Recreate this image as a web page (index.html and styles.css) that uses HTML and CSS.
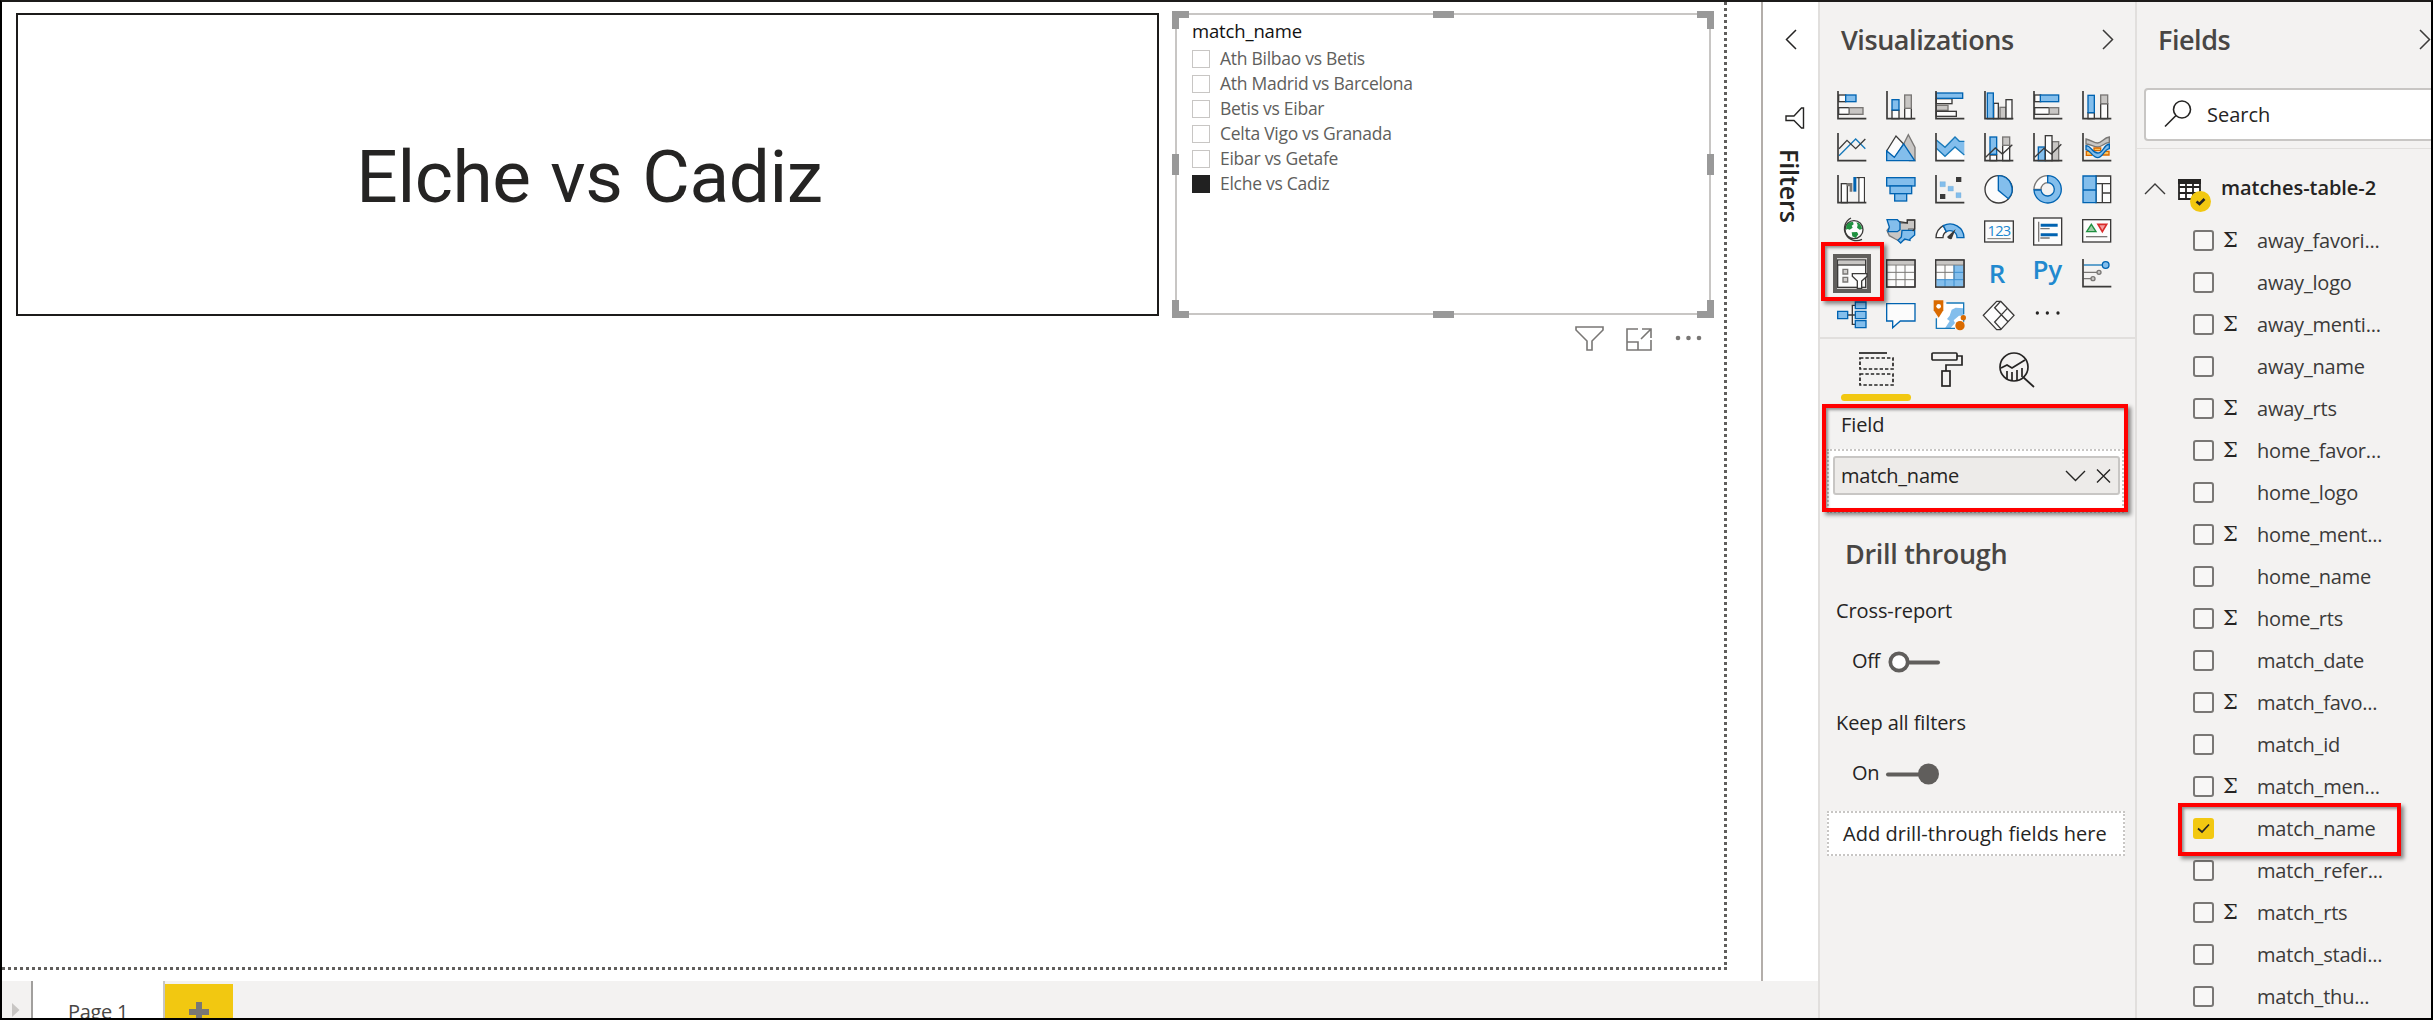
FILE: index.html
```html
<!DOCTYPE html>
<html lang="en">
<head>
<meta charset="utf-8">
<title>Report editor</title>
<link rel="stylesheet" href="styles.css">
</head>
<body>
<div class="app">
  <div class="report">
    <div class="canvas">
      <div class="page">
        <div class="card"><span>Elche vs Cadiz</span></div>
        <div class="slicer">
          <i class="h tl"></i><i class="h tr"></i><i class="h bl"></i><i class="h br"></i>
          <i class="h tm"></i><i class="h bm"></i><i class="h lm"></i><i class="h rm"></i>
          <div class="slicer-title">match_name</div>
          <ul class="slicer-list">
            <li><i></i><span>Ath Bilbao vs Betis</span></li>
            <li><i></i><span>Ath Madrid vs Barcelona</span></li>
            <li><i></i><span>Betis vs Eibar</span></li>
            <li><i></i><span>Celta Vigo vs Granada</span></li>
            <li><i></i><span>Eibar vs Getafe</span></li>
            <li class="on"><i></i><span>Elche vs Cadiz</span></li>
          </ul>
        </div>
        <svg class="visual-tools" width="126" height="28" viewBox="0 0 126 28" fill="none" stroke="#797775" stroke-width="1.6">
          <path d="M1 3H28V6L17 17V26H12V17L1 6Z"/>
          <path d="M63 5H52V26H76V16M52 18H63V26M67 5H76V14M76 5L66 15"/>
          <g fill="#797775" stroke="none"><circle cx="103" cy="14" r="2.3"/><circle cx="113.500" cy="14" r="2.3"/><circle cx="124" cy="14" r="2.3"/></g>
        </svg>
      </div>
    </div>
    <div class="filters">
      <svg width="12" height="21" viewBox="0 0 12 21" fill="none" stroke="#252423" stroke-width="1.5"><path d="M11 1L1.500 10.500L11 20"/></svg>
      <svg class="funnel" width="20" height="22" viewBox="0 0 20 22" fill="none" stroke="#252423" stroke-width="1.4"><path d="M18.500 1V21H16.500L9 13.500H1V9H9L16.500 1Z"/></svg>
      <span>Filters</span>
    </div>
    <div class="tabs">
      <div class="scroll"><svg width="8" height="14" viewBox="0 0 8 14"><path d="M0 0L7.500 7L0 14Z" fill="#c8c6c4"/></svg></div>
      <div class="tab">Page 1</div>
      <div class="add"><svg width="20" height="20" viewBox="0 0 20 20"><path d="M10 0V20M0 10H20" stroke="#797775" stroke-width="6"/></svg></div>
    </div>
  </div>

  <div class="viz">
    <div class="head"><h2>Visualizations</h2><svg width="12" height="21" viewBox="0 0 12 21" fill="none" stroke="#3b3a39" stroke-width="1.5"><path d="M1 1L10.500 10.500L1 20"/></svg></div>
    <div class="grid">
      <svg viewBox="0 0 90 90"><rect class="w" x="5" y="12" width="21" height="20"/><rect class="b" x="26" y="12" width="31" height="20"/><rect class="w" x="5" y="50" width="32" height="20"/><rect class="g" x="37" y="50" width="41" height="20"/><path class="ax" d="M3 0V83H88"/></svg>
      <svg viewBox="0 0 90 90"><rect class="w" x="18" y="58" width="21" height="25"/><rect class="b" x="18" y="26" width="21" height="31"/><rect class="w" x="56" y="52" width="20" height="31"/><rect class="g" x="56" y="12" width="20" height="40"/><path class="ax" d="M3 0V83H88"/></svg>
      <svg viewBox="0 0 90 90"><rect class="w" x="4" y="23" width="47" height="15"/><rect class="g" x="4" y="43" width="35" height="15"/><rect class="w" x="4" y="61" width="60" height="15"/><rect class="b" x="4" y="6" width="79" height="16"/><path class="ax" d="M3 0V83H88"/></svg>
      <svg viewBox="0 0 90 90"><rect class="w" x="29" y="37" width="14" height="46"/><rect class="g" x="48" y="49" width="18" height="34"/><rect class="w" x="66" y="26" width="18" height="57"/><rect class="b" x="10" y="6" width="18" height="77"/><path class="ax" d="M3 0V83H88"/></svg>
      <svg viewBox="0 0 90 90"><rect class="w" x="5" y="12" width="18" height="20"/><rect class="b" x="22" y="12" width="55" height="20"/><rect class="w" x="5" y="50" width="44" height="20"/><rect class="g" x="49" y="50" width="28" height="20"/><path class="ax" d="M3 0V83H88"/></svg>
      <svg viewBox="0 0 90 90"><rect class="w" x="18" y="65" width="19" height="18"/><rect class="b" x="18" y="13" width="19" height="52"/><rect class="w" x="56" y="38" width="21" height="45"/><rect class="g" x="56" y="12" width="21" height="26"/><path class="ax" d="M3 0V83H88"/></svg>

      <svg viewBox="0 0 90 90"><path class="bl" d="M6 68L56 18L85 47"/><path class="dk" d="M6 47L30 22L56 47L85 18"/><path class="ax" d="M3 0V83H88"/></svg>
      <svg viewBox="0 0 90 90"><path class="g" d="M53 33L67 5L87 43V83H70Z"/><path class="w" d="M2 54L30 9L53 33L25 76L2 60Z"/><path class="b" d="M2 83V54L25 73L53 33L86 83Z"/></svg>
      <svg viewBox="0 0 90 90"><path fill="#fff" d="M4 46L30 70L60 42L87 64V82H4Z"/><path fill="#83beec" d="M4 21L30 43L60 12L73 25H88V64L60 42L30 70L4 46Z"/><path class="bl" d="M4 21L30 43L60 12L73 25H88M4 46L30 70L60 42L88 66"/><path class="ax" d="M3 0V83H88"/></svg>
      <svg viewBox="0 0 90 90"><rect class="w" x="18" y="66" width="20" height="17"/><rect class="b" x="18" y="12" width="20" height="52"/><rect class="w" x="56" y="37" width="21" height="46"/><rect class="g" x="56" y="12" width="21" height="25"/><path class="dk" d="M5 73L34 45L55 63L85 35"/><path class="ax" d="M3 0V83H88"/></svg>
      <svg viewBox="0 0 90 90"><rect class="g" x="57" y="26" width="20" height="57"/><rect class="b" x="16" y="42" width="20" height="41"/><rect class="w" x="37" y="8" width="20" height="75"/><path class="dk" d="M5 73L33 46L55 63L85 34"/><path class="ax" d="M3 0V83H88"/></svg>
      <svg viewBox="0 0 90 90"><path class="g" d="M12 18C30 22 35 30 47 30S65 14 82 12V28C65 30 60 42 47 42S28 34 12 33Z"/><path class="o" d="M13 55H30V67H13ZM62 55H81V66H62ZM36 45H56V53H36Z"/><path class="b" d="M12 38C28 38 30 60 47 60S64 36 82 33V47C66 50 62 74 47 74S26 52 12 50Z"/><path class="ax" d="M3 0V83H88"/></svg>

      <svg viewBox="0 0 90 90"><rect class="w" x="13" y="26" width="18" height="57"/><path d="M29 24H46V50H38V34H29Z" fill="#797775"/><path fill="#0063b1" d="M49 6H58V50H49Z"/><path class="dk" d="M58 8H82V83M66 8V83"/><path fill="#fff" d="M68 10H80V81H68Z"/><path class="ax" d="M3 0V83H88"/></svg>
      <svg viewBox="0 0 90 90"><rect class="b" x="2" y="8" width="85" height="25"/><rect class="b" x="12" y="33" width="65" height="23"/><rect class="b" x="26" y="56" width="36" height="22"/></svg>
      <svg viewBox="0 0 90 90"><path fill="#3b3a39" d="M63 6H79V21H63ZM15 57H31V72H15Z"/><path fill="#83beec" stroke="#6ea6d0" d="M15 20H31V35H15ZM39 34H55V48H39ZM63 53H78V68H63Z"/><path class="ax" d="M3 0V83H88"/></svg>
      <svg viewBox="0 0 90 90"><circle class="w" cx="44" cy="43" r="41"/><path class="b" d="M43 2A41 41 0 0 1 73 71L43 46Z"/></svg>
      <svg viewBox="0 0 90 90"><path class="w gs" d="M3 43A41 41 0 0 1 44 2V23A20 20 0 0 0 24 43Z"/><path class="b" d="M44 2A41 41 0 1 1 3 45H24A20 20 0 1 0 44 23Z"/></svg>
      <svg viewBox="0 0 90 90"><path class="w" d="M42 3H86V83H42ZM42 26H86M61 26V83M61 54H86"/><path class="b" d="M3 3H42V83H3ZM3 45H42"/></svg>

      <svg viewBox="0 0 90 90"><circle class="w" cx="51" cy="38" r="27"/><path fill="#1f9140" d="M28 26C32 17 40 14 48 15L50 22L44 26L47 32L38 38L32 36L27 38ZM58 16C68 18 74 26 75 36L68 38L60 32L62 24ZM44 46L60 45L64 52L56 63L46 58Z"/><path class="dk" d="M42 3A36 36 0 1 0 75 67"/></svg>
      <svg viewBox="0 0 90 90"><path class="g" d="M3 40L8 34H40V18H64V9H86V36H68L64 66L40 72L28 66L10 56Z"/><path class="b" d="M3 8H34L42 16V38L34 44H6L10 30Z"/><path class="b" d="M48 40H86V54L72 66V70L56 66L44 78L36 70L46 60Z"/><path d="M40 14L64 18V9H86V36L80 42" class="dk"/></svg>
      <svg viewBox="0 0 90 90"><path class="w" d="M3 62A42 42 0 0 1 25 26L34 44A21 21 0 0 0 24 62Z"/><path class="b" d="M25 26A42 42 0 0 1 87 62H66A21 21 0 0 0 34 44Z"/><path fill="#3b3a39" d="M36 60L62 36L50 66Q40 68 36 60Z"/></svg>
      <svg viewBox="0 0 90 90"><rect class="w" x="2" y="12" width="86" height="63"/><text class="num" x="45" y="57">123</text><path d="M10 65H80" stroke="#797775" stroke-width="3"/></svg>
      <svg viewBox="0 0 90 90"><rect class="w" x="2" y="3" width="84" height="81"/><path d="M17 14V74M22 35H50M22 63H50" stroke="#797775" stroke-width="4"/><path d="M23 25H74M23 53H74" stroke="#0063b1" stroke-width="9"/></svg>
      <svg viewBox="0 0 90 90"><rect class="w" x="2" y="8" width="84" height="67"/><path d="M14 44L28 22L42 44Z" fill="#a0cda8" stroke="#1f9140" stroke-width="4"/><path d="M48 22H74L61 44Z" fill="#f5a0a0" stroke="#d92c2c" stroke-width="5"/><path d="M12 59H76" stroke="#797775" stroke-width="4"/></svg>

      <div class="picked"><svg viewBox="0 0 90 90"><rect class="w" x="2" y="3" width="84" height="82"/><path fill="#c8c6c4" d="M4 5H84V17H4Z"/><path class="dk" d="M2 18H86"/><path d="M18 31H32V45H18ZM18 55H32V69H18Z" fill="#d2d0ce" stroke="#797775" stroke-width="4"/><path class="w" d="M46 44H90V52L74 66V88H61V66L46 52Z"/></svg></div>
      <svg viewBox="0 0 90 90"><rect class="w" x="2" y="3" width="85" height="81"/><path fill="#c8c6c4" d="M4 5H85V17H4Z"/><path d="M3 18H87M3 40H87M3 62H87M30 18V84M57 18V84" class="gl"/><rect class="dk" x="2" y="3" width="85" height="81"/></svg>
      <svg viewBox="0 0 90 90"><rect class="w" x="2" y="3" width="85" height="81"/><path fill="#c8c6c4" d="M4 5H85V17H4Z"/><path fill="#83beec" d="M57 18H85V83H4V62H57Z"/><path d="M3 18H87M3 40H57M30 18V62M57 18V62" class="gl"/><path d="M4 62H86M57 40H86M30 62V83M57 18V83" stroke="#3b8ed0" stroke-width="3"/><rect class="dk" x="2" y="3" width="85" height="81"/></svg>
      <svg viewBox="0 0 90 90"><text class="lang" x="39" y="71">R</text></svg>
      <svg viewBox="0 0 90 90"><text class="lang" x="43" y="61">Py</text></svg>
      <svg viewBox="0 0 90 90"><path d="M5 40H46M5 59H28" stroke="#797775" stroke-width="4"/><path class="bl" d="M5 18H60"/><circle class="b" cx="71" cy="18" r="10"/><circle cx="51" cy="40" r="6" class="g"/><circle cx="33" cy="59" r="6" class="g"/><path class="ax" d="M3 0V83H88"/></svg>

      <svg viewBox="0 0 90 90"><path class="dk" d="M30 42H54M54 13H46V70H54"/><path class="b" d="M2 31H32V53H2ZM55 3H87V23H55ZM55 31H87V53H55ZM55 59H87V80H55Z"/></svg>
      <svg viewBox="0 0 90 90"><path class="w bs" d="M2 8H87V60H43L20 80V60H2Z"/></svg>
      <svg viewBox="0 0 90 90"><path fill="#fff" d="M8 6H86V82H8Z"/><path fill="#83beec" d="M50 26L62 20L86 22V44H72L56 58L60 66L46 82H30L44 60L36 54L44 44Z"/><path class="bl" d="M34 6H86V40M4 52V82H60M86 56V62"/><path fill="#d96a00" d="M-4 -2H25V28L11 50L-4 28Z"/><circle cx="11" cy="16" r="7" fill="#fff"/><circle cx="75" cy="74" r="14" fill="#d96a00"/><circle cx="85" cy="50" r="8" fill="#d96a00"/></svg>
      <svg viewBox="0 0 90 90"><path class="w" d="M50 1L90 43L50 86H38L-2 43L38 1Z"/><path class="dk" d="M50 1L32 20L72 62M70 22L32 63L52 85"/></svg>
      <svg viewBox="0 0 90 90"><g fill="#252423"><circle cx="13" cy="36" r="5"/><circle cx="43" cy="36" r="5"/><circle cx="75" cy="36" r="5"/></g></svg>
    </div>

    <div class="modes">
      <svg width="36" height="36" viewBox="0 0 36 36" fill="none" stroke="#252423" stroke-width="1.7"><path d="M0 1H28"/><path stroke-dasharray="3.400 2" d="M1 6H34V17H1ZM1 22H34V33H1Z"/></svg>
      <svg width="32" height="36" viewBox="0 0 32 36" fill="none" stroke="#252423" stroke-width="1.7"><rect x="1" y="1" width="25" height="7" rx="1"/><path d="M26 4H31V13H15V19"/><rect x="11" y="19" width="8" height="15"/></svg>
      <svg width="36" height="36" viewBox="0 0 36 36" fill="none" stroke="#252423" stroke-width="1.700"><circle cx="15" cy="15" r="14"/><path d="M24 25L35 35M2 16L8 13L13 16L26 8M8 19V27M13 20V29M18 18V29M23 16V25"/></svg>
    </div>

    <div class="label field-label">Field</div>
    <div class="well"><div class="pill"><span>match_name</span>
      <svg width="46" height="16" viewBox="0 0 46 16" fill="none" stroke="#252423" stroke-width="1.4"><path d="M1 3L10.500 12.500L20 3M32 1.500L45 14.500M45 1.500L32 14.500"/></svg></div></div>
    <h2 class="drill">Drill through</h2>
    <div class="label cross">Cross-report</div>
    <div class="toggle"><span>Off</span><svg width="54" height="22" viewBox="0 0 54 22"><path d="M20 11.500H50" stroke="#605e5c" stroke-width="4" stroke-linecap="round"/><circle cx="11" cy="11" r="8.700" fill="#fff" stroke="#605e5c" stroke-width="3.700"/></svg></div>
    <div class="label keep">Keep all filters</div>
    <div class="toggle"><span class="onlab">On</span><svg width="54" height="22" viewBox="0 0 54 22"><path d="M2 11.500H40" stroke="#605e5c" stroke-width="4" stroke-linecap="round"/><circle cx="42.500" cy="11" r="10.500" fill="#605e5c"/></svg></div>
    <div class="drop"><span>Add drill-through fields here</span></div>
    <i class="mark m-slicer"></i><i class="mark m-field"></i>
  </div>

  <div class="fields">
    <div class="head"><h2>Fields</h2><svg width="12" height="21" viewBox="0 0 12 21" fill="none" stroke="#3b3a39" stroke-width="1.500"><path d="M1 1L10.500 10.500L1 20"/></svg></div>
    <div class="search"><svg width="28" height="28" viewBox="0 0 28 28" fill="none" stroke="#252423" stroke-width="1.600"><circle cx="18" cy="9.500" r="8.500"/><path d="M12 15.500L1 26.500"/></svg><span>Search</span></div>
    <div class="table">
      <svg width="22" height="12" viewBox="0 0 22 12" fill="none" stroke="#3b3a39" stroke-width="1.400"><path d="M1 11L11 1L21 11"/></svg>
      <svg class="ticon" width="34" height="33" viewBox="0 0 34 33"><path d="M1 1H22V20H1ZM1 8H22M1 14H22M8 1V20M15 1V20" fill="#fff" stroke="#252423" stroke-width="1.800"/><path d="M0 0H23V5H0Z" fill="#252423"/><circle cx="22.500" cy="22.500" r="10.500" fill="#f2c811"/><path d="M18.500 22.500L21.500 25L26.500 20" stroke="#252423" stroke-width="2.600" fill="none"/></svg>
      <strong>matches-table-2</strong>
    </div>
    <ul class="rows">
      <li><i></i><b>Σ</b><span>away_favori...</span></li>
      <li><i></i><b></b><span>away_logo</span></li>
      <li><i></i><b>Σ</b><span>away_menti...</span></li>
      <li><i></i><b></b><span>away_name</span></li>
      <li><i></i><b>Σ</b><span>away_rts</span></li>
      <li><i></i><b>Σ</b><span>home_favor...</span></li>
      <li><i></i><b></b><span>home_logo</span></li>
      <li><i></i><b>Σ</b><span>home_ment...</span></li>
      <li><i></i><b></b><span>home_name</span></li>
      <li><i></i><b>Σ</b><span>home_rts</span></li>
      <li><i></i><b></b><span>match_date</span></li>
      <li><i></i><b>Σ</b><span>match_favo...</span></li>
      <li><i></i><b></b><span>match_id</span></li>
      <li><i></i><b>Σ</b><span>match_men...</span></li>
      <li class="on"><i><svg width="21" height="21" viewBox="0 0 21 21"><path d="M5 10.500L9 14L16 6.500" fill="none" stroke="#252423" stroke-width="1.700"/></svg></i><b></b><span>match_name</span></li>
      <li><i></i><b></b><span>match_refer...</span></li>
      <li><i></i><b>Σ</b><span>match_rts</span></li>
      <li><i></i><b></b><span>match_stadi...</span></li>
      <li><i></i><b></b><span>match_thu...</span></li>
    </ul>
    <i class="mark m-name"></i>
  </div>
</div>
</body>
</html>
```
FILE: styles.css
```css
* { box-sizing: border-box; }
body { margin: 0; font: 20px/30px "Open Sans", "Noto Sans", sans-serif; color: #252423; }
ul { list-style: none; margin: 0; padding: 0; }
h2 { margin: 0; font-size: 27px; line-height: 40px; font-weight: 600; color: #484644; letter-spacing: -.45px; white-space: nowrap; }
svg { display: block; flex: none; overflow: visible; }
span, strong { white-space: nowrap; }

.app { display: flex; width: 2433px; height: 1020px; border: 2px solid #000; border-top-color: #1c1b1a; overflow: hidden; background: #fff; }

/* report area: canvas and filters pane over the page tabs */
.report { display: grid; grid-template: 979px 37px / 1759px 58px; width: 1817px; flex: none; }
.canvas { position: relative; }
.page { position: relative; width: 1725px; height: 968px; }
.page::before, .page::after { content: ""; position: absolute; }
.page::before { right: 0; top: 0; width: 3px; height: 968px; background: repeating-linear-gradient(#605e5c 0 3px, transparent 3px 6px); }
.page::after { left: 0; bottom: 0; height: 3px; width: 1725px; background: repeating-linear-gradient(90deg, #605e5c 0 3px, transparent 3px 6px); }
.card { position: absolute; left: 14px; top: 11px; width: 1143px; height: 303px; border: 2px solid #1c1b1a; display: flex; align-items: center; justify-content: center; }
.card span { font: 73px/90px Roboto, sans-serif; letter-spacing: -.4px; word-spacing: 2px; padding-top: 24px; padding-left: 4px; }
.slicer { position: absolute; left: 1173px; top: 11px; width: 536px; height: 302px; border: 2px solid #c8c6c4; padding: 4px 0 0 15px; }
.h { position: absolute; background: #999; width: 21px; height: 7px; }
.tl, .tr, .bl.h, .br { width: 17px; height: 18px; background: none; border: 0 solid #999; }
.tl { left: -5px; top: -4px; border-width: 7px 0 0 7px; }
.tr { right: -5px; top: -4px; border-width: 7px 7px 0 0; }
.bl.h { left: -5px; bottom: -5px; border-width: 0 0 7px 7px; }
.br { right: -5px; bottom: -5px; border-width: 0 7px 7px 0; }
.tm { left: 256px; top: -4px; }
.bm { left: 256px; bottom: -5px; }
.lm, .rm { width: 7px; height: 21px; top: 139px; }
.lm { left: -5px; }
.rm { right: -5px; }
.slicer-title { font-size: 18.500px; line-height: 24px; font-weight: 500; letter-spacing: -.15px; color: #111; }
.slicer-list { padding-top: 3px; }
.slicer-list li { display: flex; align-items: center; height: 25px; font-size: 17.500px; line-height: 25px; color: #605e5c; letter-spacing: -.27px; }
.slicer-list i { width: 18px; height: 18px; border: 1px solid #c8c6c4; margin-right: 10px; }
.slicer-list .on i { background: #212121; border-color: #212121; }
.visual-tools { position: absolute; left: 1573px; top: 322px; }

.filters { background: #fff; border-left: 2px solid #b3aeaa; border-right: 1px solid #e1dfdd; padding: 27px 0 0 22px; display: flex; flex-direction: column; align-items: flex-start; }
.filters .funnel { margin: 57px 0 0 0; }
.filters span { writing-mode: vertical-rl; font-size: 25px; font-weight: 600; line-height: 30px; margin: 20px 0 0 -10px; letter-spacing: -.1px; }

.tabs { grid-column: 1 / 3; display: flex; background: #f3f2f1; border-right: 1px solid #e1dfdd; }
.scroll { width: 31px; border-right: 2px solid #a19f9d; padding: 22px 0 0 10px; }
.tab { width: 132px; background: #fff; border-right: 2px solid #c8c6c4; text-align: center; padding: 16px 0 0 0; color: #484644; letter-spacing: -.3px; }
.add { width: 68px; margin-top: 3px; background: #f2c811; padding: 18px 0 0 24px; }

/* visualizations pane */
.viz { position: relative; width: 316px; flex: none; background: #f3f2f1; border-left: 1px solid #e1dfdd; }
.head { display: flex; align-items: center; justify-content: space-between; height: 40px; margin: 17px 21px 32px 21px; }
.head h2 { padding-top: 2px; }
.grid { display: grid; grid-template-columns: repeat(6, 30px); grid-auto-rows: 30px; gap: 12px 19px; padding: 0 0 6px 17px; border-bottom: 2px solid #e1dfdd; }
.grid svg { width: 30px; height: 30px; }
.w, .b, .g, .o, .dk, .ax, .bl:not(.h), .gl { stroke-width: 4; }
.w { fill: #fcfcfc; stroke: #3b3a39; }
.b { fill: #83beec; stroke: #0063b1; }
.g { fill: #c8c6c4; stroke: #797775; }
.o { fill: #fbc45c; stroke: #d96a00; }
.dk, .ax { fill: none; stroke: #3b3a39; }
.ax { stroke-width: 5; }
path.bl { fill: none; stroke: #1779ba; }
.gl { fill: none; stroke: #797775; stroke-width: 3; }
.gs { stroke: #797775; }
.bs { stroke: #0063b1; }
.num { font: 44px "Open Sans", sans-serif; fill: #1b87d0; text-anchor: middle; letter-spacing: -2px; }
.lang { font: 600 78px "Open Sans", sans-serif; fill: #2189cf; text-anchor: middle; }
.picked { margin: -5px -4px; width: 38px; height: 39px; border: 4px solid #605e5c; padding: 1px 0 0 0; background: #d2d0ce; }

.modes { display: flex; gap: 36px; padding: 13px 0 7px 39px; position: relative; height: 63px; }
.modes::after { content: ""; position: absolute; left: 21px; bottom: 1px; width: 70px; height: 7px; border-radius: 4px; background: #f2c811; }
.label { letter-spacing: -.1px; }
.field-label { padding: 8px 0 0 21px; height: 47px; }
.well { height: 64px; margin: 0 11px 0 7px; background: #fff; border: 2px dotted #c8c6c4; padding: 5px 2px 0 4px; }
.pill { display: flex; justify-content: space-between; align-items: center; height: 39px; border: 2px solid #c8c6c4; border-radius: 3px; background: #edebe9; padding: 0 7px 0 6px; letter-spacing: -.25px; }
.drill { padding: 21px 0 0 25px; letter-spacing: -.3px; }
.cross { padding: 22px 0 20px 16px; }
.toggle { display: flex; align-items: center; height: 30px; padding-left: 32px; }
.toggle span { width: 36px; letter-spacing: -.4px; }
.toggle svg { margin-top: 1px; }
.toggle .onlab { width: 34px; }
.keep { padding: 32px 0 20px 16px; }
.drop { display: flex; align-items: center; height: 45px; margin: 23px 10px 0 7px; background: #fff; border: 2px dotted #c8c6c4; padding-left: 14px; letter-spacing: 0.05px; }

/* fields pane */
.fields { position: relative; flex: 1; min-width: 0; background: #f3f2f1; border-left: 2px solid #e1dfdd; overflow: hidden; }
.fields .head { margin: 17px 0 29px 21px; }
.search { display: flex; align-items: center; height: 53px; margin: 0 -10px 0 7px; background: #fff; border: 2px solid #c8c6c4; border-radius: 4px; padding-left: 18px; gap: 15px; }
.search svg { margin-top: -2px; }
.table { display: flex; align-items: flex-start; margin-top: 7px; border-top: 1px solid #e1dfdd; height: 71px; padding: 0 0 0 7px; }
.table > svg:first-child { margin-top: 34px; }
.ticon { margin: 30px 9px 0 12px; }
.table strong { font-weight: 600; margin-top: 24px; letter-spacing: -.05px; }
.rows li { display: flex; align-items: center; height: 42px; padding-left: 56px; color: #3b3a39; }
.rows i { width: 21px; height: 21px; border: 2px solid #797775; border-radius: 3px; background: #f8f7f6; }
.rows .on i { border: 0; background: #f2c811; }
.rows b { width: 16px; margin: 0 18px 0 9px; font: 400 21px/30px "DejaVu Serif", serif; color: #252423; }
.rows span { letter-spacing: -.2px; padding-top: 2px; }

/* red highlight frames */
.mark { position: absolute; border: 4px solid #f00; box-shadow: 3px 3px 4px rgba(0,0,0,.45), inset 2px 2px 3px rgba(0,0,0,.4); }
.m-slicer { left: 1px; top: 240px; width: 63px; height: 59px; }
.m-field { left: 2px; top: 402px; width: 306px; height: 108px; }
.m-name { left: 41px; top: 801px; width: 223px; height: 53px; }
```
